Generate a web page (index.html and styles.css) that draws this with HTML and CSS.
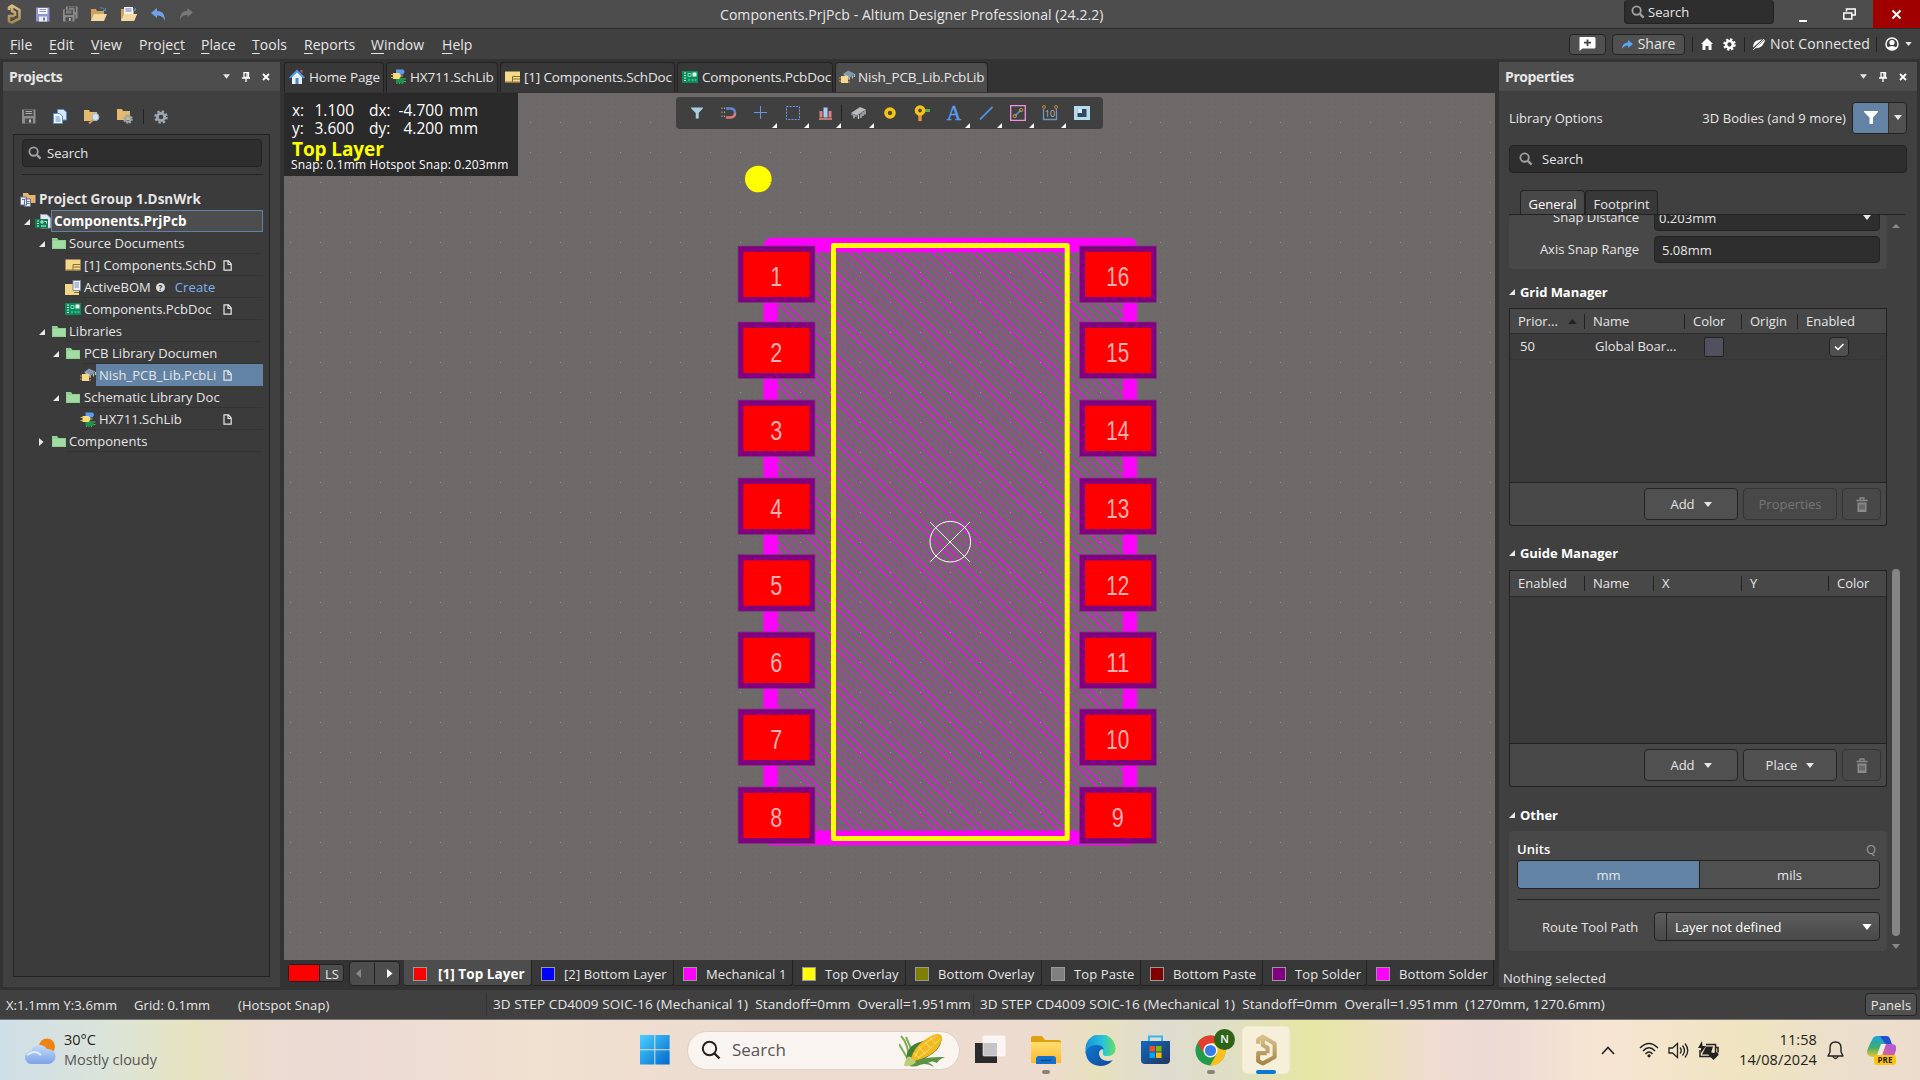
FILE: index.html
```html
<!DOCTYPE html>
<html lang="en">
<head>
<meta charset="utf-8">
<title>Components.PrjPcb - Altium Designer Professional (24.2.2)</title>
<link rel="stylesheet" href="styles.css">
</head>
<body>
<svg class="defs" width="0" height="0">
  <defs>
    <linearGradient id="gold" x1="0" y1="0" x2="0" y2="1"><stop offset="0" stop-color="#d9c08a"/><stop offset="1" stop-color="#a5864a"/></linearGradient>
    <linearGradient id="win" x1="0" y1="0" x2="1" y2="1"><stop offset="0" stop-color="#4cd0ff"/><stop offset="1" stop-color="#0068cc"/></linearGradient>
    <linearGradient id="fold" x1="0" y1="0" x2="0" y2="1"><stop offset="0" stop-color="#ffdf70"/><stop offset="1" stop-color="#fbb92c"/></linearGradient>
    <linearGradient id="shop" x1="0" y1="0" x2="1" y2="1"><stop offset="0" stop-color="#0d6cc4"/><stop offset="1" stop-color="#25345c"/></linearGradient>
    <linearGradient id="edgeA" x1="0" y1="0" x2="1" y2="0"><stop offset="0" stop-color="#1593e0"/><stop offset=".6" stop-color="#2cc4d8"/><stop offset="1" stop-color="#62e05c"/></linearGradient>
    <linearGradient id="edgeB" x1="0" y1="0" x2="1" y2="1"><stop offset="0" stop-color="#0f78d0"/><stop offset="1" stop-color="#10499c"/></linearGradient>
    <linearGradient id="cloud" x1="0" y1="0" x2="0" y2="1"><stop offset="0" stop-color="#c4dafb"/><stop offset="1" stop-color="#7ba3e6"/></linearGradient>
    <linearGradient id="copA" x1="0" y1="0" x2="0" y2="1"><stop offset="0" stop-color="#1ba0e8"/><stop offset=".55" stop-color="#3fae6a"/><stop offset="1" stop-color="#f2c62e"/></linearGradient>
    <linearGradient id="copB" x1="1" y1="0" x2="0" y2="1"><stop offset="0" stop-color="#a757e8"/><stop offset="1" stop-color="#f2667a"/></linearGradient>
    <symbol id="i-altium" viewBox="0 0 14 20"><path d="M2 6V3.500L5 1.500 12.500 6V14.500L5 18.500 2 17V12H7.500M5 1.500V7L8 8.500V12" fill="none" stroke="url(#gold)" stroke-width="2.600" stroke-linejoin="round"/></symbol>
    <symbol id="i-save" viewBox="0 0 14 15"><path d="M0 .5h13.500v14H0z" fill="#8f95d2"/><path d="M2 1h9.500v6H2z" fill="#f4f4fa"/><path d="M3.500 2.500h6.500M3.500 4.500h6.500" stroke="#8f95d2"/><path d="M3 9.500h8v5H3z" fill="#eceefa"/><path d="M7 10.500h2v3H7z" fill="#7076b8"/></symbol>
    <symbol id="i-saveg" viewBox="0 0 14 15"><path d="M0 .5h13.500v14H0z" fill="#8c8c8c"/><path d="M2 1h9.500v6H2z" fill="#4a4a4a"/><path d="M3.500 2.500h6.500M3.500 4.500h6.500" stroke="#aaa"/><path d="M3 9.500h8v5H3z" fill="#4a4a4a"/><path d="M7 10.500h2v3H7z" fill="#bbb"/></symbol>
    <symbol id="i-open" viewBox="0 0 17 15"><path d="M0 2h5l1 2h7v10H0z" fill="#cfa35e"/><path d="M3 7h13l-3 7H0z" fill="#f3d9a0"/><path d="M9 1q3-1 4.500 2M12 3.500h2.500V1" stroke="#4b92c8" fill="none"/></symbol>
    <symbol id="i-undo" viewBox="0 0 15 13"><path d="M0 5L6 0V3C12 3 14 7 14 13 12 8 9 7.500 6 7.500V10z" fill="#6ea2e8"/></symbol>
    <symbol id="i-mag" viewBox="0 0 15 15"><circle cx="6" cy="6" r="4.500" fill="none" stroke="#a0a0a0" stroke-width="2"/><path d="M9.500 9.500l4 4" stroke="#a0a0a0" stroke-width="2.500"/></symbol>
    <symbol id="i-down" viewBox="0 0 8 5"><path d="M0 0h8L4 5z" fill="currentColor"/></symbol>
    <symbol id="i-pin" viewBox="0 0 8 10"><path d="M2 .5h4.500v5H2zM5 .5v5M0 6h8M4 6v4" fill="none" stroke="#fff" stroke-width="1.300"/></symbol>
    <symbol id="i-x" viewBox="0 0 8 8"><path d="M1 1l6 6M7 1l-6 6" stroke="#fff" stroke-width="1.800"/></symbol>
    <symbol id="i-tri" viewBox="0 0 6 6"><path d="M6 0v6H0z" fill="#e8e8e8"/></symbol>
    <symbol id="i-folder" viewBox="0 0 14 12"><path d="M0 1h5l1.500 2H14v9H0z" fill="#8fd092"/><path d="M1 4h12v7H1z" fill="#a3dca2"/></symbol>
    <symbol id="i-sch" viewBox="0 0 15 12"><path d="M0 .5h15v11H0z" fill="#f5d987"/><path d="M0 11h15M7.500 11V5.500H15M8 8h7" stroke="#8a6d35" fill="none"/></symbol>
    <symbol id="i-pcb" viewBox="0 0 16 12"><path d="M0 0h16v12H0z" fill="#0e8a5c"/><path d="M2 2h2M2 4.500h2M2 7h2M2 9.500h2" stroke="#d8f5e6"/><path d="M6 2.500h3v3H6zM6 9h2M9.500 9h2M12.500 9h2" stroke="#6fe0ac" fill="none"/><path d="M10.500 1.500h4v4h-4z" fill="#e8fff4"/></symbol>
    <symbol id="i-bom" viewBox="0 0 16 15"><path d="M0 4h14v11H0z" fill="#f3d58a"/><path d="M9 10h5M9 12.500h5" stroke="#8a6d35"/><path d="M8 .5h7.500v10H8z" fill="#f0f3fa" stroke="#7b88a8"/><path d="M9.500 3h4.500M9.500 5h4.500M9.500 7h4.500" stroke="#7484ac"/></symbol>
    <symbol id="i-pcblib" viewBox="0 0 16 14"><path d="M4 4l5-3.500 6.500 3L11 7.500z" fill="#8298a8"/><path d="M5 4.500l5 3 .5 2M15.500 4v3M13.500 5.500v3" stroke="#b9c6cf" stroke-width="1.200" fill="none"/><path d="M2 6h7v7H2z" fill="#f5d98b"/><path d="M0 8h2M0 11h2M9 9h2M9 12h2" stroke="#c9a557"/></symbol>
    <symbol id="i-schlib" viewBox="0 0 15 15"><path d="M5 .5h7q3 2 0 5H5z" fill="#5b9df0"/><path d="M5 9h8v5H5z" fill="#1f9150"/><path d="M6 14v1M8.500 14v1M11 14v1M13 10h2M13 12.500h2" stroke="#4fba4f"/><path d="M2 4h6q4 2.500 0 6H2z" fill="#f7dc7c"/><path d="M0 5.500h3M0 8.500h3M9 7h3" stroke="#d9b544"/></symbol>
    <symbol id="i-home" viewBox="0 0 16 15"><path d="M3 7l5-5 5 5v8H3z" fill="#e9f1fb"/><path d="M0 8.500L8 .5l8 8-1.500 1L8 3.500l-6.500 6z" fill="#4a9dea"/><path d="M11.500 1h2v3.500l-2-2z" fill="#c55"/><path d="M6.500 9h3v6h-3z" fill="#4a86c8"/></symbol>
    <symbol id="i-doc" viewBox="0 0 9 11"><path d="M1 .8h4.500L8.200 4v6.200H1zM5 1v3.500h3" fill="none" stroke="#e6e6e6" stroke-width="1.200"/></symbol>
    <symbol id="i-group" viewBox="0 0 16 15"><path d="M3 1h5l1 2h6.500v8H3z" fill="#e3b571"/><path d="M.5 5h6v8h-6zM4.500 7h6v7.500h-6z" fill="#e9ecf5" stroke="#65718f"/><path d="M6 9.500h3.500M6 11.500h3.500M2 7.500h2" stroke="#65718f"/></symbol>
    <symbol id="i-prj" viewBox="0 0 16 15"><path d="M5.500.5H12L15.500 4v10h-10z" fill="#e4e4ee" stroke="#9a9ab0"/><path d="M0 5h13v9H0z" fill="#0d7f54"/><path d="M2 7h2M2 9.500h2M2 12h2M6 7h2v2H6zM6 12h5M9.500 7.500h2v2" stroke="#cff2e0" fill="none"/></symbol>
    <symbol id="i-docs" viewBox="0 0 14 15"><path d="M4.500.5h6L13.500 3v8h-9z" fill="#d5e6fa" stroke="#5a8fd0"/><path d="M.5 4.500h6l3 2.500v7.500h-9z" fill="#f2f7fd" stroke="#5a8fd0"/><path d="M2.500 8h4M2.500 10h5M2.500 12h5" stroke="#5a8fd0"/></symbol>
    <symbol id="i-fmag" viewBox="0 0 16 15"><path d="M0 1h5l1 2h7v9H0z" fill="#e6b971"/><circle cx="11.500" cy="8" r="3.500" fill="#cfe4f2" stroke="#9fb4c4"/><path d="M9 11l-4 3.500" stroke="#c59b58" stroke-width="2"/></symbol>
    <symbol id="i-gear" viewBox="0 0 14 14"><circle cx="7" cy="7" r="5.600" fill="none" stroke="currentColor" stroke-width="2.300" stroke-dasharray="2.400 2"/><circle cx="7" cy="7" r="3.700" fill="none" stroke="currentColor" stroke-width="2.800"/></symbol>
    <symbol id="i-trash" viewBox="0 0 12 15"><path d="M.5 3.500h11M4 3V1h4v2" stroke="#8a8a8a" stroke-width="1.300" fill="none"/><path d="M1.500 5.500h9V15h-9z" fill="#8a8a8a"/><path d="M4 7.500v5M6 7.500v5M8 7.500v5" stroke="#484848"/></symbol>
    <symbol id="i-funnel" viewBox="0 0 14 13"><path d="M0 0h14v1L9 6.500V13H5.500V6.500L0 1z" fill="currentColor"/></symbol>
  </defs>
</svg>

<div class="app">
  <header class="titlebar">
    <div class="quick">
      <svg width="14" height="20"><use href="#i-altium"/></svg>
      <svg width="14" height="15"><use href="#i-save"/></svg>
      <svg width="15" height="16" viewBox="0 0 15 16"><use href="#i-saveg" x="3" y="0" width="12" height="13"/><use href="#i-saveg" x="0" y="3" width="12" height="13"/></svg>
      <svg width="17" height="15"><use href="#i-open"/></svg>
      <svg width="17" height="16" viewBox="0 0 17 16"><use href="#i-open" width="17" height="15" y="1"/><path d="M3 1h9v7H3z" fill="#f4f4f8"/><path d="M4.500 3h6M4.500 5h6" stroke="#77a"/><path d="M4 8h12l-3 7H1z" fill="#f3d9a0"/></svg>
      <svg width="15" height="13"><use href="#i-undo"/></svg>
      <svg width="14" height="12" viewBox="0 0 15 13"><path d="M15 5L9 0V3C3 3 1 7 1 13 3 8 6 7.500 9 7.500V10z" fill="#777"/></svg>
    </div>
    <h1 class="title">Components.PrjPcb - Altium Designer Professional (24.2.2)</h1>
    <div class="field title-search"><svg width="14" height="14"><use href="#i-mag"/></svg><span>Search</span></div>
    <div class="winbtn"><svg width="10" height="18"><path d="M1 16h8" stroke="#fff" stroke-width="2"/></svg></div>
    <div class="winbtn"><svg width="13" height="12" viewBox="0 0 13 12"><path d="M3.500 3.500V1h8.700v6H9" fill="none" stroke="#fff" stroke-width="1.500"/><path d="M.8 5h8v6h-8z" fill="none" stroke="#fff" stroke-width="1.500"/></svg></div>
    <div class="winbtn close"><svg width="11" height="11"><path d="M1.500 1.500l8 8M9.500 1.500l-8 8" stroke="#fff" stroke-width="2"/></svg></div>
  </header>

  <nav class="menubar">
    <div class="menus"><span><u>F</u>ile</span><span><u>E</u>dit</span><span><u>V</u>iew</span><span>Proje<u>c</u>t</span><span><u>P</u>lace</span><span><u>T</u>ools</span><span><u>R</u>eports</span><span><u>W</u>indow</span><span><u>H</u>elp</span></div>
    <div class="cloudbar">
      <div class="btn note"><svg width="17" height="14"><path d="M1 0h14q1.500 0 1.500 1.500V10q0 1.500-1.500 1.500H3.500L.5 14V1Q.5 0 1 0z" fill="#fff"/><path d="M5 5.700h7M8.500 2.500v6.500" stroke="#444" stroke-width="1.800"/></svg></div>
      <div class="btn share"><svg width="11" height="9"><path d="M6 0l5 4-5 4V5.500Q2 5.500 0 9 0 3 6 2.500z" fill="#5aa7f5"/></svg>Share</div>
      <i class="vsep"></i>
      <svg class="c-home" width="12" height="12"><path d="M6 0l6 6h-1.500v6H7.500V8h-3v4h-3V6H0z" fill="#fff"/></svg>
      <svg class="c-gear" width="13" height="13"><use href="#i-gear"/></svg>
      <i class="vsep"></i>
      <svg class="c-plug" width="14" height="12"><path d="M1 9q0-6 6-7 5-1 6-2-1 2 0 3l-3 5q-4 3-8 2z" fill="#fff"/><path d="M0 12L13 0" stroke="#404040" stroke-width="2"/><path d="M1 12L12 1" stroke="#fff" stroke-width="1"/></svg>
      <span class="notconn">Not Connected</span>
      <i class="vsep"></i>
      <svg class="c-user" width="14" height="14"><circle cx="7" cy="7" r="6" fill="none" stroke="#fff" stroke-width="1.500"/><circle cx="7" cy="5.500" r="2.600" fill="#fff"/><path d="M2 11q5-4 10 0-5 4.500-10 0z" fill="#fff"/></svg>
      <svg class="c-dd" width="7" height="4"><use href="#i-down"/></svg>
    </div>
  </nav>

  <main class="work">
    <aside class="panel projects">
      <div class="phead"><b>Projects</b><svg width="7" height="5"><use href="#i-down"/></svg><svg width="8" height="10"><use href="#i-pin"/></svg><svg width="8" height="8"><use href="#i-x"/></svg></div>
      <div class="ptools">
        <svg width="14" height="15"><use href="#i-saveg"/></svg>
        <svg width="14" height="15"><use href="#i-docs"/></svg>
        <svg width="16" height="15"><use href="#i-fmag"/></svg>
        <svg class="fgear" width="16" height="15" viewBox="0 0 16 15"><path d="M0 0h5l1 2h7v9H0z" fill="#e6b971"/><use href="#i-gear" x="6" y="5" width="10" height="10"/></svg>
        <i class="vsep"></i>
        <svg class="fgear" width="14" height="14"><use href="#i-gear"/></svg>
      </div>
      <div class="treebox">
        <div class="field tree-search"><svg width="14" height="14"><use href="#i-mag"/></svg><span>Search</span></div>
        <hr class="rule">
        <ul class="tree">
          <li class="l0 strong"><i></i><svg width="16" height="15"><use href="#i-group"/></svg><span>Project Group 1.DsnWrk</span></li>
          <li class="l1 strong current"><i><svg width="6" height="6"><use href="#i-tri"/></svg></i><svg width="16" height="15"><use href="#i-prj"/></svg><span>Components.PrjPcb</span></li>
          <li class="l2"><i><svg width="6" height="6"><use href="#i-tri"/></svg></i><svg width="14" height="12"><use href="#i-folder"/></svg><span>Source Documents</span></li>
          <li class="l3"><i></i><svg width="15" height="12"><use href="#i-sch"/></svg><span class="clip">[1] Components.SchD</span><svg class="dirty" width="9" height="11"><use href="#i-doc"/></svg></li>
          <li class="l3"><i></i><svg width="16" height="15"><use href="#i-bom"/></svg><span>ActiveBOM</span><em class="help">?</em><a>Create</a></li>
          <li class="l3"><i></i><svg width="16" height="12"><use href="#i-pcb"/></svg><span class="clip">Components.PcbDoc</span><svg class="dirty" width="9" height="11"><use href="#i-doc"/></svg></li>
          <li class="l2"><i><svg width="6" height="6"><use href="#i-tri"/></svg></i><svg width="14" height="12"><use href="#i-folder"/></svg><span>Libraries</span></li>
          <li class="l3"><i><svg width="6" height="6"><use href="#i-tri"/></svg></i><svg width="14" height="12"><use href="#i-folder"/></svg><span class="clip">PCB Library Documen</span></li>
          <li class="l4 selected"><i></i><svg width="16" height="14"><use href="#i-pcblib"/></svg><span class="clip">Nish_PCB_Lib.PcbLib</span><svg class="dirty" width="9" height="11"><use href="#i-doc"/></svg></li>
          <li class="l3"><i><svg width="6" height="6"><use href="#i-tri"/></svg></i><svg width="14" height="12"><use href="#i-folder"/></svg><span class="clip">Schematic Library Doc</span></li>
          <li class="l4"><i></i><svg width="15" height="15"><use href="#i-schlib"/></svg><span class="clip">HX711.SchLib</span><svg class="dirty" width="9" height="11"><use href="#i-doc"/></svg></li>
          <li class="l2"><i><svg width="5" height="8"><path d="M0 0l4.500 4L0 8z" fill="#e8e8e8"/></svg></i><svg width="14" height="12"><use href="#i-folder"/></svg><span>Components</span></li>
        </ul>
      </div>
    </aside>

    <section class="center">
      <div class="tabs">
        <div class="tab"><svg width="16" height="15"><use href="#i-home"/></svg>Home Page</div>
        <div class="tab"><svg width="15" height="15"><use href="#i-schlib"/></svg>HX711.SchLib</div>
        <div class="tab"><svg width="15" height="12"><use href="#i-sch"/></svg>[1] Components.SchDoc</div>
        <div class="tab"><svg width="16" height="12"><use href="#i-pcb"/></svg>Components.PcbDoc</div>
        <div class="tab on"><svg width="16" height="14"><use href="#i-pcblib"/></svg>Nish_PCB_Lib.PcbLib</div>
      </div>

      <div class="canvas">
        <svg class="board" width="1211" height="867" viewBox="284 93 1211 867">
          <defs>
            <pattern id="fine" x="2" y="2" width="6" height="6" patternUnits="userSpaceOnUse"><rect width="1" height="1" fill="#666362"/></pattern>
            <pattern id="coarse" x="20" y="2" width="30" height="30" patternUnits="userSpaceOnUse"><rect width="1" height="1" fill="#989594"/></pattern>
            <clipPath id="body"><rect x="770" y="245" width="360" height="593"/></clipPath>
          </defs>
          <rect x="284" y="93" width="1211" height="867" fill="#6e6a69"/>
          <rect x="284" y="93" width="1211" height="867" fill="url(#fine)"/>
          <circle cx="758.300" cy="179" r="13.300" fill="#ff0"/>
          <g clip-path="url(#body)"><path id="hatch" fill="none" stroke="#f0f" shape-rendering="crispEdges"/></g>
          <rect x="284" y="93" width="1211" height="867" fill="url(#coarse)"/>
          <rect x="770.500" y="245" width="359.500" height="593" rx="1" fill="none" stroke="#f0f" stroke-width="14.300" stroke-linejoin="round"/>
          <rect x="833.500" y="245.500" width="233.700" height="593" fill="none" stroke="#ff0" stroke-width="5" stroke-linejoin="round"/>
          <g id="pads"></g>
          <g fill="none" stroke="#fff" stroke-width="1"><circle cx="950.300" cy="541.700" r="20.300"/><path d="M930 522l40 40M970 522l-40 40"/></g>
        </svg>

        <div class="hud">
          <div class="hudrow"><span>x:</span><span>1.100</span><span>dx:</span><span>-4.700</span><span>mm</span></div>
          <div class="hudrow"><span>y:</span><span>3.600</span><span>dy:</span><span>4.200</span><span>mm</span></div>
          <b>Top Layer</b>
          <small>Snap: 0.1mm Hotspot Snap: 0.203mm</small>
        </div>

        <div class="toolstrip">
          <span><svg width="12" height="12" class="pale"><use href="#i-funnel"/></svg></span>
          <span><svg width="16" height="12"><path d="M5 1.500h4q5 0 5 4.500" stroke="#5c86d8" stroke-width="2.600" fill="none"/><path d="M14 6q0 4.500-5 4.500H5" stroke="#d87880" stroke-width="2.600" fill="none"/><path d="M1 .5v11M3.500 .5v11" stroke="#aaa" stroke-dasharray="1.500 2.500"/></svg></span>
          <span class="more"><svg width="14" height="14"><path d="M6.500 0v13M0 6.500h13" stroke="#6d92e8"/></svg></span>
          <span class="more"><svg width="14" height="14"><path d="M.5.5h13v13H.5z" fill="none" stroke="#6d9af0" stroke-dasharray="2 1.200"/></svg></span>
          <span class="more"><svg width="13" height="13"><path d="M0 12h13" stroke="#e98a8a" stroke-width="1.500"/><path d="M.5 4h3v6.500h-3zM9.500 4h3v6.500h-3z" fill="#e07f80"/><path d="M4.500.5h4v10h-4z" fill="#a8d0ee"/></svg></span>
          <i></i>
          <span class="more"><svg width="16" height="13"><path d="M1 6L10 0l6 2.500-9 6z" fill="#b9b9b9"/><path d="M1 6l6 2.500v2L1 8z" fill="#888"/><path d="M8.500 8v4M11 6.500V11M13 5v4M15 3.500v4M4 8.500v3" stroke="#c8d2da" stroke-width="1.200"/></svg></span>
          <span><svg width="12" height="12"><circle cx="6" cy="6" r="4" fill="#5a4820" stroke="#f5c518" stroke-width="3.600"/></svg></span>
          <span><svg width="16" height="16"><path d="M10 5.500h6" stroke="#5cb04a" stroke-width="3"/><path d="M6 9v7" stroke="#e0953a" stroke-width="3.500"/><circle cx="6" cy="5.500" r="3.600" fill="#5a4820" stroke="#f5c518" stroke-width="3.400"/></svg></span>
          <span class="more glyph">A</span>
          <span class="more"><svg width="14" height="14"><path d="M1 13.500L13.500 1" stroke="#4d92e0" stroke-width="1.800"/></svg></span>
          <span class="more"><svg width="16" height="16"><path d="M.7.7h14.600v14.600H.7z" fill="none" stroke="#f094e0" stroke-width="1.300"/><path d="M5 11l6-6" stroke="#5590d0" stroke-width="1.600"/><circle cx="4.800" cy="11" r="1.700" fill="none" stroke="#c8923a"/><circle cx="11.200" cy="5" r="1.700" fill="none" stroke="#c8923a"/></svg></span>
          <span class="more"><svg width="16" height="16"><path d="M1.500 4v10.500h13V4" fill="none" stroke="#6f95c0" stroke-width="1.300"/><circle cx="2" cy="2" r="1.500" fill="none" stroke="#c08a30"/><circle cx="14" cy="2" r="1.500" fill="none" stroke="#c08a30"/><text x="8" y="12" text-anchor="middle" font-size="9" fill="#bbb">10</text></svg></span>
          <span><svg width="16" height="14"><path d="M0 0h16v14H0z" fill="#b6dbee"/><path d="M3.500 3h9v8h-9z" fill="#2e4a60"/><path d="M3.500 3H8v4H3.500z" fill="#d6ecf6"/></svg></span>
        </div>
      </div>

      <div class="layers">
        <div class="ls"><i></i><span>LS</span></div>
        <div class="spin"><svg width="6" height="10"><path d="M5 0v9L0 4.500z" fill="#888"/></svg><i></i><svg width="6" height="10"><path d="M0 0v9l5.500-4.500z" fill="#fff"/></svg></div>
        <div class="layertabs">
          <div class="on"><i class="red"></i>[1] Top Layer</div>
          <div><i class="blue"></i>[2] Bottom Layer</div>
          <div><i class="magenta"></i>Mechanical 1</div>
          <div><i class="yellow"></i>Top Overlay</div>
          <div><i class="olive"></i>Bottom Overlay</div>
          <div><i class="gray"></i>Top Paste</div>
          <div><i class="maroon"></i>Bottom Paste</div>
          <div><i class="purple"></i>Top Solder</div>
          <div><i class="magenta"></i>Bottom Solder</div>
        </div>
      </div>
    </section>

    <aside class="panel props">
      <div class="phead"><b>Properties</b><svg width="7" height="5"><use href="#i-down"/></svg><svg width="8" height="10"><use href="#i-pin"/></svg><svg width="8" height="8"><use href="#i-x"/></svg></div>
      <div class="scope"><span>Library Options</span><span class="objs">3D Bodies (and 9 more)</span><div class="filter"><div><svg width="14" height="13"><use href="#i-funnel"/></svg></div><div><svg width="8" height="5"><use href="#i-down"/></svg></div></div></div>
      <div class="field prop-search"><svg width="14" height="14"><use href="#i-mag"/></svg><span>Search</span></div>
      <div class="ptabs"><div class="on">General</div><div>Footprint</div></div>
      <div class="scroller">
        <div class="sections">
          <div class="card snap">
            <div class="formrow up"><label>Snap Distance</label><div class="field">0.203mm<svg width="8" height="5"><use href="#i-down"/></svg></div></div>
            <div class="formrow"><label>Axis Snap Range</label><div class="field">5.08mm</div></div>
          </div>
          <h2 class="t-grid"><svg width="6" height="6"><use href="#i-tri"/></svg>Grid Manager</h2>
          <div class="table">
            <div class="cols grid-cols head"><span>Prior...<svg width="9" height="5"><path d="M0 5h9L4.500 0z" fill="#222"/></svg></span><span>Name</span><span>Color</span><span>Origin</span><span>Enabled</span></div>
            <div class="cols grid-cols row"><span>50</span><span>Global Boar...</span><span><i class="swatch"></i></span><span></span><span><i class="check"><svg width="10" height="8"><path d="M1 3.500L4 6.500 9.500 1" fill="none" stroke="#fff" stroke-width="1.500"/></svg></i></span></div>
          </div>
          <div class="tfoot"><div class="btn">Add<svg width="8" height="5"><use href="#i-down"/></svg></div><div class="btn off">Properties</div><div class="btn off bin"><svg width="12" height="15"><use href="#i-trash"/></svg></div></div>
          <h2 class="t-guide"><svg width="6" height="6"><use href="#i-tri"/></svg>Guide Manager</h2>
          <div class="table guides">
            <div class="cols guide-cols head"><span>Enabled</span><span>Name</span><span>X</span><span>Y</span><span>Color</span></div>
          </div>
          <div class="tfoot"><div class="btn">Add<svg width="8" height="5"><use href="#i-down"/></svg></div><div class="btn">Place<svg width="8" height="5"><use href="#i-down"/></svg></div><div class="btn off bin"><svg width="12" height="15"><use href="#i-trash"/></svg></div></div>
          <h2 class="t-other"><svg width="6" height="6"><use href="#i-tri"/></svg>Other</h2>
          <div class="card other">
            <div class="units"><b>Units</b><span>Q</span></div>
            <div class="segment"><div class="on">mm</div><div>mils</div></div>
            <hr class="rule">
            <div class="route"><label>Route Tool Path</label><div class="combo"><i></i><span>Layer not defined</span><svg width="10" height="6" viewBox="0 0 8 5"><use href="#i-down"/></svg></div></div>
          </div>
        </div>
        <div class="scrollbar"><svg width="8" height="4" viewBox="0 0 8 4"><path d="M0 4h8L4 0z" fill="#8a8a8a"/></svg><i></i><svg width="8" height="5"><use href="#i-down"/></svg></div>
      </div>
      <div class="nothing">Nothing selected</div>
    </aside>
  </main>

  <footer class="status"><span>X:1.1mm Y:3.6mm</span><span>Grid: 0.1mm</span><span>(Hotspot Snap)</span><span class="info">3D STEP CD4009 SOIC-16 (Mechanical 1)&nbsp; Standoff=0mm&nbsp; Overall=1.951mm</span><span class="info">3D STEP CD4009 SOIC-16 (Mechanical 1)&nbsp; Standoff=0mm&nbsp; Overall=1.951mm&nbsp; (1270mm, 1270.6mm)</span><div class="btn panels">Panels</div></footer>

  <footer class="taskbar">
    <div class="weather"><svg width="31" height="27"><circle cx="22" cy="8.500" r="8" fill="#f0820f"/><path d="M7 26a6.500 6.500 0 0 1-1-13 9 9 0 0 1 16-2 7.500 7.500 0 0 1 2 15z" fill="url(#cloud)"/><path d="M2 17q8-6 14 0" stroke="#e2edfd" fill="none" stroke-width="2"/></svg><div><p>30°C</p><p class="dim">Mostly cloudy</p></div></div>
    <svg class="start" width="30" height="30"><path d="M0 0h14.300v14.300H0zM15.300 0h14.300v14.300H15.300zM0 15.300h14.300v14.300H0zM15.300 15.300h14.300v14.300H15.300z" fill="url(#win)"/></svg>
    <div class="search"><svg width="20" height="20"><circle cx="8.500" cy="8.500" r="6.700" fill="none" stroke="#222" stroke-width="2"/><path d="M13.500 13.500l5 5" stroke="#222" stroke-width="2.400"/></svg><span>Search</span>
      <svg class="corn" width="48" height="34"><path d="M2 3q8 8 8 26M0 11l10 17M7 4l6 14" stroke="#7fae58" stroke-width="2" fill="none"/><path d="M8 32Q5 15 18 10L42 2q3 12-12 21-12 9-22 9z" fill="#3f7f35"/><path d="M12 27Q14 12 34 2q9-3 9 4-4 16-27 22z" fill="#f6b91d"/><path d="M16 24Q20 12 38 3M19 25Q30 18 41 6M15 20l5 5M20 14l6 7M26 9l6 7M31 5l6 6" stroke="#ffe27a" fill="none"/><path d="M8 32q14-9 38-8-6 2-8 6-5-3-9 0 3 0 6 4-8-5-14-2-7 3-13 0z" fill="#5c9345"/><path d="M5 33q2-12 7-9l5 5q-4 5-12 4z" fill="#b9cf7a"/></svg></div>
    <svg class="task" width="31" height="30"><path d="M0 8h22v20H0z" fill="#2b2b2b"/><rect x="8" y="1" width="22" height="20" rx="1" fill="#fff" fill-opacity=".72" stroke="#fff" stroke-opacity=".6"/></svg>
    <div class="app-ico run"><svg width="30" height="29"><path d="M0 2q0-2 2-2h9l3 4h14q2 0 2 2v8H0z" fill="#e0a010"/><path d="M0 6h28q2 0 2 2v19H0z" fill="url(#fold)"/><path d="M5 28v-5q0-3 3-3h14q3 0 3 3v5z" fill="#1470c8"/><path d="M10 24.500h10" stroke="#0a4a90" stroke-width="1.500"/></svg></div>
    <div class="app-ico"><svg width="31" height="31"><path d="M.5 15A15 15 0 0 1 30.500 13q.5 8-8 8-6 0-4.500-4 0-5-6-6-7 0-11.500 7z" fill="url(#edgeA)"/><path d="M.5 17Q4 9 12 10q5 0 7 4-5 0-5 5 1 7 9 7 3 0 5-1-5 6-13 6Q2 30 .5 17z" fill="url(#edgeB)"/></svg></div>
    <div class="app-ico"><svg width="30" height="30"><path d="M8 6V1.500h13V6" fill="none" stroke="#35b6f2" stroke-width="2"/><path d="M0 6h29v19q0 4-4 4H4q-4 0-4-4z" fill="url(#shop)"/><path d="M8.500 11h5.500v5.500H8.500z" fill="#f25022"/><path d="M15 11h5.500v5.500H15z" fill="#7fba00"/><path d="M8.500 17.500h5.500V23H8.500z" fill="#00a4ef"/><path d="M15 17.500h5.500V23H15z" fill="#ffb900"/></svg></div>
    <div class="app-ico run"><svg width="31" height="31"><circle cx="15.500" cy="15.500" r="15" fill="#229a4a"/><path d="M2.500 8A15 15 0 0 1 28.500 8L15.500 9 8 17z" fill="#e43e30"/><path d="M15.500 8H28.600A15 15 0 0 1 15 30.500l7-12z" fill="#fbc11a"/><circle cx="15.500" cy="15.500" r="7" fill="#fff"/><circle cx="15.500" cy="15.500" r="5.600" fill="#3b7de8"/></svg><b class="badge">N</b></div>
    <div class="tile"><svg width="22" height="32" viewBox="0 0 14 20"><use href="#i-altium"/></svg></div>
    <div class="tray">
      <svg class="t-chev" width="14" height="9"><path d="M1 8l6-6.500L13 8" fill="none" stroke="#222" stroke-width="1.600"/></svg>
      <svg class="t-wifi" width="20" height="16" viewBox="0 0 20 16"><path d="M1 6q9-9 18 0M4 9q6-6.500 12 0M6.500 12q3.500-4 7 0" fill="none" stroke="#222" stroke-width="1.500"/><circle cx="10" cy="13.800" r="1.600" fill="#222"/></svg>
      <svg class="t-vol" width="21" height="17"><path d="M1 6h3.500l5-4.500v14L4.500 11H1z" fill="none" stroke="#222" stroke-width="1.300"/><path d="M12 5.500q2.500 3 0 6M14.500 3.500q4 5 0 10M17 1.500q5.500 7 0 14" fill="none" stroke="#222" stroke-width="1.300"/></svg>
      <svg class="t-bat" width="21" height="19"><path d="M8 3.500h9.500v12H2V9" fill="none" stroke="#222" stroke-width="1.500"/><path d="M18 6.500h2v5" stroke="#222" stroke-width="1.500" fill="none"/><path d="M8 5.500h7l-2.500 8H4z" fill="#222"/><path d="M4 0L0 7h3v5l5-7H4.500z" fill="#222"/><path d="M15.500 19l-5-5q0-4 5-2 5-2 5 2z" fill="#222"/></svg>
      <div class="clock"><p>11:58</p><p>14/08/2024</p></div>
      <svg class="t-bell" width="17" height="19"><path d="M8.500 1Q3 1 3 7v4l-2 4h15l-2-4V7q0-6-5.500-6zM6 15.500q2.500 4 5 0" fill="none" stroke="#222" stroke-width="1.400" stroke-linejoin="round"/></svg>
      <div class="copilot"><svg width="30" height="26"><path d="M6 2q1-2 4-2h9q3 0 4 3l2 5h-6l-5 13H5Q0 20 0 16q0-3 6-14z" fill="url(#copA)"/><path d="M13 0h6q3 0 4 3l2 6h-6z" fill="#2350d0"/><path d="M17 8h8q5 0 4 6l-3 9q-1 3-5 3h-9q3-1 5-18z" fill="url(#copB)"/><path d="M14 8h5l-5 14H9z" fill="#f3eee2"/></svg><b>PRE</b></div>
    </div>
  </footer>
</div>
<script src="pads.js"></script>
</body>
</html>
```
FILE: pads.js
```js
const ns = 'http://www.w3.org/2000/svg';
const layer = document.getElementById('pads');
const rowTops = [246, 322, 400, 478, 554.7, 632, 709, 787];
const hatchPitch = 8.2;

function add(parent, name, attrs) {
  const el = document.createElementNS(ns, name);
  for (const key in attrs) el.setAttribute(key, attrs[key]);
  parent.appendChild(el);
  return el;
}

function pad(x, y, label) {
  const textWidth = label.length > 1 ? 23 : 12;
  add(layer, 'rect', { x, y, width: 77, height: 56.5, fill: '#800080', stroke: '#763f76', 'stroke-width': 0.8 });
  add(layer, 'rect', { x: x + 5.5, y: y + 5.8, width: 66, height: 45.2, fill: '#f00' });
  const t = add(layer, 'text', { x: x + 38.2, y: y + 40, class: 'pin', textLength: textWidth, lengthAdjust: 'spacingAndGlyphs' });
  t.textContent = label;
}

rowTops.forEach((y, i) => {
  pad(738, y, String(i + 1));
  pad(1079.6, y, String(16 - i));
});

let d = '';
for (let x = 170; x < 1130; x += hatchPitch) d += `M${x} 245l593 593`;
document.getElementById('hatch').setAttribute('d', d);
```
FILE: styles.css
```css
* { box-sizing: border-box; }
body { margin: 0; width: 1920px; height: 1080px; overflow: hidden; background: #333; color: #e6e6e6; font: 13px/16px "Open Sans", "Noto Sans", sans-serif; }
p, h1, h2, ul { margin: 0; padding: 0; font-weight: 400; }
svg { flex: none; display: block; }
.defs { position: absolute; }
.app { display: flex; flex-direction: column; height: 1080px; }

.titlebar { display: flex; height: 29px; background: #4d4d4d; border-bottom: 1px solid #2c2c2c; }
.quick { display: flex; align-items: center; gap: 13px; width: 720px; padding-left: 7px; }
.quick svg:first-child { margin-right: 2px; }
.title { font-size: 14px; line-height: 29px; letter-spacing: .06px; width: 904px; }
.field { display: flex; align-items: center; background: #2e2e2e; border: 1px solid #222; border-radius: 4px; }
.title-search { width: 150px; height: 24px; border-top: 0; padding-left: 6px; gap: 3px; margin-right: 5px; }
.winbtn { width: 47px; display: flex; align-items: center; justify-content: center; color: #fff; }
.winbtn.close { width: 47px; background: #a00000; }

.menubar { display: flex; justify-content: space-between; height: 30px; background: #404040; font-size: 14px; line-height: 32px; }
.menus { display: grid; grid-template-columns: 39px 42px 48px 62px 51px 52px 67px 71px 50px; padding-left: 10px; letter-spacing: .05px; }
.menus u { text-underline-offset: 3px; }
.cloudbar { display: flex; align-items: center; padding-right: 8px; color: #e6e6e6; }
.btn { display: flex; align-items: center; justify-content: center; background: #505050; border: 1px solid #242424; border-radius: 4px; gap: 9px; }
.btn.off { background: #484848; border-color: #353535; color: #767676; }
.note { width: 37px; height: 21px; margin-right: 6px; }
.share { width: 73px; height: 21px; gap: 5px; margin-right: 7px; }
.vsep { width: 1px; height: 15px; background: #222; }
.c-home { margin: 0 10px 0 8px; }
.c-gear { color: #fff; margin-right: 8px; }
.c-plug { margin: 0 4px 0 7px; }
.notconn { width: 106px; letter-spacing: .15px; }
.c-user { margin: 0 6px 0 8px; }

.work { display: flex; height: 931px; padding: 0 3px; }
.panel { display: flex; flex-direction: column; margin-top: 3px; height: 925px; background: #404040; }
.projects { width: 277px; margin-right: 4px; }
.phead { display: flex; align-items: center; height: 29px; background: #4d4d4d; padding: 0 10px 0 6px; gap: 12px; }
.phead b { font-size: 14px; font-weight: 700; flex: 1; letter-spacing: -.4px; }
.ptools { display: flex; align-items: center; height: 43px; padding: 8px 0 0 19px; gap: 17px; }
.ptools .vsep { margin: 0 -7px; }
.fgear { color: #9aa8b0; }
.treebox { width: 257px; height: 843px; margin-left: 10px; border: 1px solid #222; background: #3b3b3b; padding: 4px 6px 0 0; }
.tree-search { margin-left: 8px; width: 240px; height: 28px; padding-left: 5px; gap: 5px; }
.rule { border: 0; height: 1px; background: #222; margin: 7px 0 13px 8px; }
.tree { list-style: none; }
.tree li { display: flex; align-items: center; height: 22px; position: relative; }
.tree li > i { width: 14px; display: flex; align-items: center; padding-top: 2px; }
.tree li > svg { width: 16px; margin-right: 3px; }
.tree li > span { letter-spacing: .05px; white-space: nowrap; line-height: 20px; }
.tree .l0 > i { width: 6px; }
.tree .l1 { padding-left: 10px; }
.tree .l1 > i { width: 11px; }
.tree .l2 { padding-left: 25px; }
.tree .l2 > i, .tree .l3 > i, .tree .l4 > i { width: 12px; }
.tree .l3 { padding-left: 39px; }
.tree .l4 { padding-left: 54px; }
.tree .l2 > svg:nth-child(2) { margin-right: 2px; }
.tree .l2 { background: linear-gradient(#333, #333) 52px 100% / 196px 1px no-repeat; }
.tree .l3, .tree .l4 { background: linear-gradient(#333, #333) 68px 100% / 182px 1px no-repeat; }
.tree .clip { flex: 1; overflow: hidden; margin-right: 7px; }
.tree li > svg.dirty { width: 9px; margin-right: 31px; }
.tree li:not(:has(.dirty)) > .clip { margin-right: 40px; }
.tree .strong > span { font-weight: 700; font-size: 13.500px; letter-spacing: .03px; }
.tree .current > span { flex: 1; height: 22px; background: #4d4d4d; border: 1px solid #5f83a8; color: #fff; padding-left: 2px; margin-left: -3px; }
.tree .selected { background: linear-gradient(#6283a4, #6283a4) 82px 0 / 168px 22px no-repeat; }
.help { width: 9px; height: 9px; border-radius: 5px; background: #ddd; color: #333; font: 700 8px/9px "Open Sans", sans-serif; text-align: center; margin: 0 10px 0 5px; }
.tree a { color: #7fb2ee; letter-spacing: .1px; }

.center { width: 1211px; display: flex; flex-direction: column; margin-right: 4px; }
.tabs { display: flex; height: 34px; padding-top: 3px; gap: 2px; }
.tab { display: flex; align-items: center; height: 30px; background: #383838; border: 1px solid #222; border-bottom: 0; border-radius: 4px 4px 0 0; padding: 0 0 2px 4px; gap: 4px; white-space: nowrap; font-size: 13.500px; letter-spacing: -.15px; }
.tab:nth-child(1) { width: 100px; }
.tab:nth-child(2) { width: 112px; }
.tab:nth-child(3) { width: 175px; }
.tab:nth-child(4) { width: 156px; }
.tab.on { width: 153px; background: #4d4d4d; gap: 3px; padding-left: 3px; }
.canvas { position: relative; height: 867px; overflow: hidden; }
.pin { font: 28px "Liberation Sans", sans-serif; fill: #ffb0b0; text-anchor: middle; }
.hud { position: absolute; left: 0; top: 0; width: 234px; height: 83px; background: #2a2a2a; color: #fff; padding: 8px 0 0 8px; }
.hudrow { display: grid; grid-template-columns: 20px 42px 38px 51px 40px; font-size: 15.500px; line-height: 18px; }
.hudrow span:nth-child(2), .hudrow span:nth-child(4) { text-align: right; }
.hudrow span:nth-child(3) { padding-left: 15px; }
.hudrow span:nth-child(5) { padding-left: 6px; letter-spacing: .3px; }
.hud b { display: block; color: #ff0; font-size: 19px; line-height: 20px; padding-top: 2px; letter-spacing: -.1px; }
.hud small { display: block; font-size: 12px; line-height: 12px; margin-left: -1px; white-space: nowrap; letter-spacing: .18px; }
.toolstrip { position: absolute; left: 392px; top: 4px; width: 427px; height: 32px; background: #404040; border-radius: 4px; display: flex; align-items: center; padding-left: 5px; }
.toolstrip span { position: relative; width: 32px; height: 32px; display: flex; align-items: center; justify-content: center; }
.toolstrip i { width: 1px; height: 16px; background: #222; }
.toolstrip .more::after { content: ""; position: absolute; right: 0; bottom: 1px; border: solid transparent; border-width: 0 0 5px 5px; border-bottom-color: #fff; }
.pale { color: #aacde0; }
.toolstrip .glyph { font: 20px "Liberation Serif", serif; color: #5c9df0; -webkit-text-stroke: .5px #5c9df0; }

.layers { display: flex; height: 27px; padding-left: 4px; }
.ls { display: flex; width: 56px; height: 18px; margin-top: 4px; border: 1px solid #222; border-radius: 3px; background: #4d4d4d; }
.ls i { width: 31px; background: red; border-right: 1px solid #222; }
.ls span { line-height: 18px; padding-left: 5px; font-size: 13px; }
.spin { display: flex; align-items: center; justify-content: space-around; width: 51px; height: 25px; margin: 1px 4px 0 5px; background: #4d4d4d; border: 1px solid #222; border-radius: 4px; }
.spin i { width: 1px; height: 21px; background: #222; }
.layertabs { display: grid; grid-template-columns: 128px 142px 119px 113px 136px 99px 122px 104px 127px; }
.layertabs div { display: flex; align-items: center; height: 26px; background: #383838; border: 1px solid #222; border-width: 0 1px 1px 0; border-radius: 0 0 3px 3px; padding: 2px 0 0 9px; white-space: nowrap; letter-spacing: .1px; }
.layertabs .on { background: #4d4d4d; color: #fff; font-weight: 700; font-size: 13.500px; letter-spacing: .05px; }
.layertabs i { width: 14px; height: 14px; border: 1px solid #999; margin-right: 9px; }
.layertabs .on i { margin-right: 11px; }
.red { background: #f00; } .blue { background: #00f; } .magenta { background: #f0f; } .yellow { background: #ff0; } .olive { background: #808000; } .gray { background: #808080; } .maroon { background: #800000; } .purple { background: #800080; }

.props { width: 418px; }
.scope { display: flex; align-items: center; height: 55px; padding: 0 10px; margin-top: -1px; }
.objs { margin-left: auto; margin-right: 6px; letter-spacing: .08px; }
.filter { display: flex; width: 55px; height: 32px; border: 1px solid #222; border-radius: 4px; background: #505050; overflow: hidden; }
.filter div { flex: 1; display: flex; align-items: center; justify-content: center; }
.filter div:first-child { flex: none; width: 36px; background: #6283a4; border-right: 1px solid #333; color: #fff; }
.prop-search { width: 398px; height: 28px; margin-left: 10px; padding-left: 9px; gap: 9px; }
.ptabs { display: flex; height: 42px; width: 396px; margin-left: 10px; padding: 17px 0 0 11px; border-bottom: 1px solid #222; }
.ptabs div { width: 73px; border: 1px solid #222; border-bottom: 0; border-radius: 4px 4px 0 0; background: #383838; line-height: 27px; text-align: center; }
.ptabs .on { width: 65px; background: #484848; color: #fff; }
.scroller { display: flex; height: 744px; }
.sections { width: 378px; margin: 0 1px 0 10px; height: 744px; overflow: hidden; }
.card { background: #484848; border-radius: 4px; }
.snap { height: 54px; overflow: hidden; }
.formrow { display: grid; grid-template-columns: 130px 226px; column-gap: 15px; align-items: center; height: 27px; margin-top: 5px; }
.formrow.up { margin-top: -11px; }
.formrow label { text-align: right; margin-top: -2px; }
.formrow .field { height: 27px; padding: 0 8px 0 7px; justify-content: space-between; }
.formrow.up .field { padding-left: 4px; }
.sections h2 { display: flex; align-items: center; gap: 5px; font-weight: 700; font-size: 13px; color: #fff; letter-spacing: -.05px; }
.t-grid { height: 39px; padding-top: 6px; }
.t-guide { height: 44px; padding-top: 9px; }
.t-other { height: 44px; padding-top: 11px; }
.table { height: 175px; border: 1px solid #222; background: #3b3b3b; }
.table.guides { height: 174px; }
.cols { display: grid; align-items: center; height: 25px; border-bottom: 1px solid #2d2d2d; }
.guide-cols { height: 26px; }
.grid-cols { grid-template-columns: 74px 100px 57px 56px 1fr; }
.guide-cols { grid-template-columns: 74px 69px 88px 87px 1fr; }
.cols span { display: flex; align-items: center; padding-left: 8px; line-height: 15px; }
.head { background: #484848; }
.head span + span { border-left: 1px solid #222; }
.head svg { margin-left: 10px; }
.row { height: 26px; border-color: #363636; }
.row span { padding-left: 10px; }
.row span:nth-child(2) { padding-left: 11px; }
.row span:nth-child(3) { padding-left: 20px; }
.row span:nth-child(5) { padding-left: 32px; }
.swatch, .check { width: 20px; height: 20px; background: #50505f; border: 1px solid #222; border-radius: 2px; display: flex; align-items: center; justify-content: center; }
.check { background: #505050; border-radius: 4px; }
.tfoot { display: flex; align-items: center; justify-content: flex-end; gap: 5px; height: 43px; background: #484848; border: 1px solid #222; border-top: 0; border-radius: 0 0 3px 3px; padding: 0 5px 0 0; }
.tfoot .btn { width: 94px; height: 32px; }
.tfoot .bin { width: 39px; }
.other { height: 120px; padding: 10px 7px 0 8px; }
.units { display: flex; justify-content: space-between; padding-right: 4px; font-weight: 600; color: #fff; }
.units b { font-weight: 600; letter-spacing: .1px; }
.units span { font-weight: 400; color: #999; }
.segment { display: grid; grid-template-columns: 182px 1fr; height: 29px; margin-top: 3px; border: 1px solid #222; border-radius: 4px; background: #505050; text-align: center; line-height: 28px; overflow: hidden; }
.segment .on { background: #6283a4; border-right: 1px solid #222; }
.other .rule { margin: 10px 0 12px; }
.route { display: flex; align-items: center; }
.route label { width: 137px; padding-left: 25px; white-space: nowrap; }
.combo { display: flex; align-items: center; flex: 1; height: 29px; border: 1px solid #222; border-radius: 4px; background: linear-gradient(#5c5c5c, #494949); color: #fff; padding-right: 7px; }
.combo i { width: 12px; height: 27px; border-right: 1px solid #222; }
.combo span { flex: 1; padding-left: 8px; }
.scrollbar { display: flex; flex-direction: column; width: 12px; padding: 9px 0 0 4px; color: #8a8a8a; }
.scrollbar i { width: 8px; height: 367px; border-radius: 4px; background: #858585; margin: 341px 0 8px; }
.nothing { padding: 11px 0 0 4px; letter-spacing: .05px; }

.status { display: grid; grid-template-columns: 128px 104px 248px 487px 1fr 52px; height: 30px; background: #404040; padding: 0 3px 0 6px; align-items: center; white-space: nowrap; border-bottom: 1px solid #777; letter-spacing: .1px; }
.info { border-left: 1px solid #333; line-height: 23px; padding-left: 6px; font-size: 13.500px; letter-spacing: .1px; }
.panels { height: 23px; }

.taskbar { display: flex; height: 60px; align-items: center; color: #222; position: relative; background: linear-gradient(90deg, #cfdfe8 0, #dce4d8 110px, #e6e3c0 190px, #ecdcd0 260px, #ecdad4 350px, #f1e1d0 540px, #eddcd0 680px, #eedbd0 1040px, #e7e1be 1095px, #dfdcd0 1160px, #dfdec4 1230px, #e6e7a4 1310px, #f0dcd0 1430px, #ecdad4 1490px, #f7e5d3 1600px, #efe4c0 1750px, #ecdfcc 1840px, #ecdccc 1920px); }
.weather { display: flex; align-items: center; gap: 8px; width: 640px; padding-left: 25px; font-size: 14.500px; line-height: 20px; }
.weather svg { margin-top: 3px; }
.dim { color: #555; }
.start { margin-right: 17px; }
.search { display: flex; align-items: center; width: 273px; height: 39px; border-radius: 20px; background: #faf4f0; border: 1px solid #dccfc6; padding-left: 13px; gap: 11px; font-size: 17px; color: #555; }
.corn { margin-left: auto; margin-right: 12px; }
.task { margin: 0 12px 0 15px; }
.app-ico { position: relative; width: 55px; height: 60px; display: flex; align-items: center; justify-content: center; }
.run::after { content: ""; position: absolute; left: 24px; bottom: 6px; width: 8px; height: 4px; border-radius: 2px; background: #8a827a; }
.badge { position: absolute; left: 31px; top: 9px; width: 21px; height: 21px; border-radius: 50%; background: #2e6418; color: #fff; font-size: 11px; line-height: 20px; text-align: center; font-weight: 600; }
.tile { position: relative; margin-left: 4px; width: 48px; height: 48px; margin-top: -1px; border-radius: 5px; background: #f6f0da; border: 1px solid #f2e9d0; display: flex; align-items: center; justify-content: center; }
.tile::after { content: ""; position: absolute; left: 13px; bottom: -1px; width: 20px; height: 4px; border-radius: 2px; background: #0a78d4; }
.tray { display: flex; align-items: center; margin-left: 311px; }
.t-wifi { margin-left: 24px; }
.t-vol { margin-left: 9px; }
.t-bat { margin-left: 9px; }
.clock { width: 98px; text-align: right; font-size: 14.500px; line-height: 20px; letter-spacing: .1px; }
.t-bell { margin-left: 10px; }
.copilot { position: relative; margin-left: 23px; height: 29px; }
.copilot b { position: absolute; left: 7px; top: 19px; width: 22px; height: 10px; border-radius: 3px; background: #ffc20e; color: #222; font-size: 8px; line-height: 10px; text-align: center; }
```
